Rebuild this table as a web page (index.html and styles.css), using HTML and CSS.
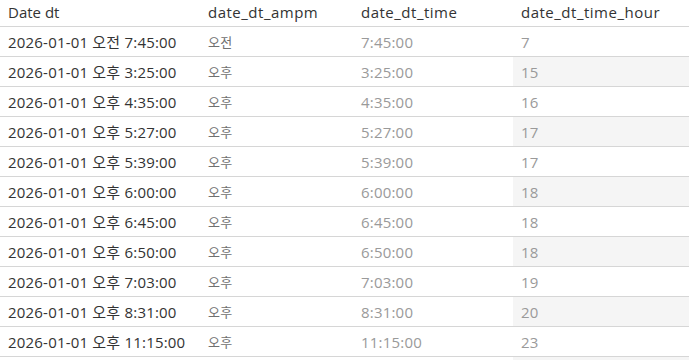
FILE: index.html
```html
<!DOCTYPE html>
<html lang="ko">
<head>
    <meta charset="UTF-8">
    <meta name="viewport" content="width=device-width, initial-scale=1.0">
    <title>date_dt</title>
    <link rel="stylesheet" href="styles.css">
</head>
<body>
    <div class="sheet">
        <div class="row head">
            <div class="cell c1">Date dt</div>
            <div class="cell c2">date_dt_ampm</div>
            <div class="cell c3">date_dt_time</div>
            <div class="cell c4">date_dt_time_hour</div>
        </div>

        <div class="row">
            <div class="cell c1">2026-01-01 오전 7:45:00</div>
            <div class="cell c2">오전</div>
            <div class="cell c3">7:45:00</div>
            <div class="cell c4">7</div>
        </div>
        <div class="row alt">
            <div class="cell c1">2026-01-01 오후 3:25:00</div>
            <div class="cell c2">오후</div>
            <div class="cell c3">3:25:00</div>
            <div class="cell c4">15</div>
        </div>
        <div class="row">
            <div class="cell c1">2026-01-01 오후 4:35:00</div>
            <div class="cell c2">오후</div>
            <div class="cell c3">4:35:00</div>
            <div class="cell c4">16</div>
        </div>
        <div class="row alt">
            <div class="cell c1">2026-01-01 오후 5:27:00</div>
            <div class="cell c2">오후</div>
            <div class="cell c3">5:27:00</div>
            <div class="cell c4">17</div>
        </div>
        <div class="row">
            <div class="cell c1">2026-01-01 오후 5:39:00</div>
            <div class="cell c2">오후</div>
            <div class="cell c3">5:39:00</div>
            <div class="cell c4">17</div>
        </div>
        <div class="row alt">
            <div class="cell c1">2026-01-01 오후 6:00:00</div>
            <div class="cell c2">오후</div>
            <div class="cell c3">6:00:00</div>
            <div class="cell c4">18</div>
        </div>
        <div class="row">
            <div class="cell c1">2026-01-01 오후 6:45:00</div>
            <div class="cell c2">오후</div>
            <div class="cell c3">6:45:00</div>
            <div class="cell c4">18</div>
        </div>
        <div class="row alt">
            <div class="cell c1">2026-01-01 오후 6:50:00</div>
            <div class="cell c2">오후</div>
            <div class="cell c3">6:50:00</div>
            <div class="cell c4">18</div>
        </div>
        <div class="row">
            <div class="cell c1">2026-01-01 오후 7:03:00</div>
            <div class="cell c2">오후</div>
            <div class="cell c3">7:03:00</div>
            <div class="cell c4">19</div>
        </div>
        <div class="row alt">
            <div class="cell c1">2026-01-01 오후 8:31:00</div>
            <div class="cell c2">오후</div>
            <div class="cell c3">8:31:00</div>
            <div class="cell c4">20</div>
        </div>
        <div class="row">
            <div class="cell c1">2026-01-01 오후 11:15:00</div>
            <div class="cell c2">오후</div>
            <div class="cell c3">11:15:00</div>
            <div class="cell c4">23</div>
        </div>
        <div class="row alt">
            <div class="cell c1"></div>
            <div class="cell c2"></div>
            <div class="cell c3"></div>
            <div class="cell c4"></div>
        </div>
    </div>
</body>
</html>
```

FILE: styles.css
```css
body {
    font-family: 'Open Sans', 'Noto Sans CJK KR', sans-serif;
    font-size: 15px;
    letter-spacing: 0.2px;
    color: #333;
    background-color: #fff;
    margin: 0;
    overflow: hidden;
}
.sheet {
    width: 689px;
}
.row {
    display: grid;
    grid-template-columns: 200px 153px 160px 176px;
    height: 30px;
    border-bottom: 1px solid #d6d6d6;
    box-sizing: border-box;
}
.row.head {
    height: 27px;
}
.cell {
    display: flex;
    align-items: center;
    padding-left: 8px;
    white-space: nowrap;
}
.head .cell {
    color: #333;
    letter-spacing: 0.5px;
    padding-bottom: 3px;
}
.head .c1 {
    letter-spacing: 0;
}
.c1 {
    color: #333;
}
.c2 {
    color: #707070;
    font-size: 13px;
}
.head .c2 {
    font-size: 15px;
}
.c3,
.c4 {
    color: #9a9a9a;
}
.alt .c4 {
    background-color: #f5f5f5;
}
```
